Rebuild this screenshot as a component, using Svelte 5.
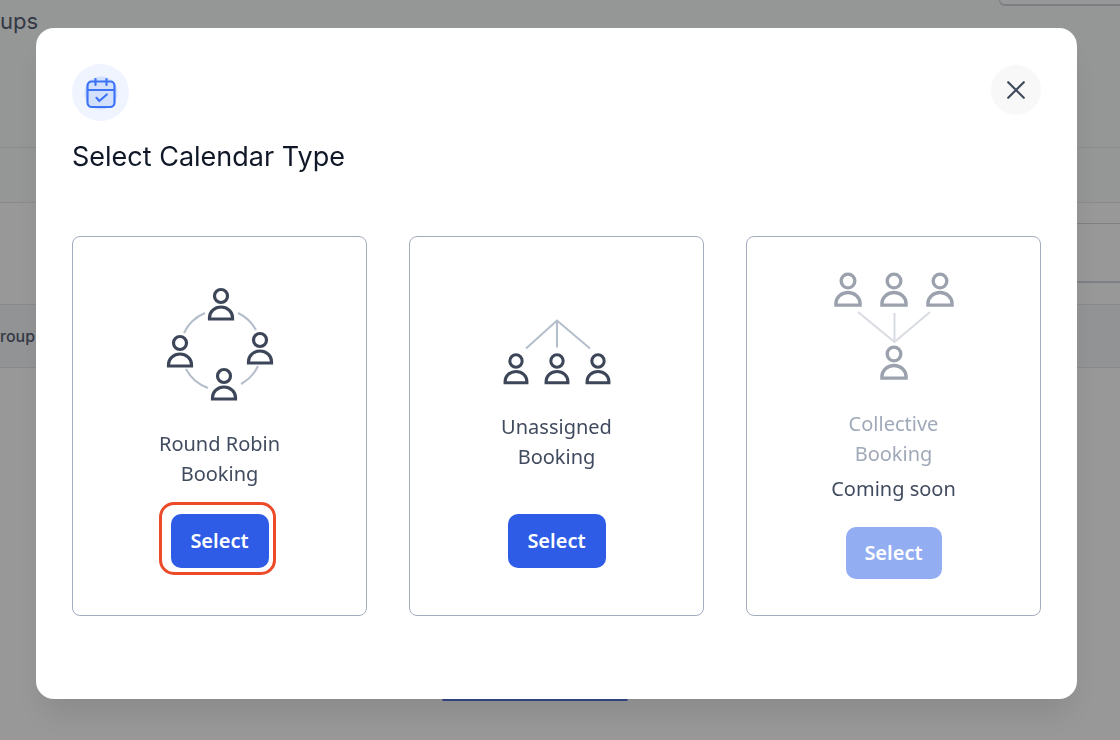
<script>
    const types = [
        {
            id: "round-robin",
            label: "Round Robin Booking",
            width: 116, height: 120, scale: 1,
            people: [[59, 11], [18, 58], [98, 55], [62, 91]],
            lines: "M22 48A40 40 0 0 1 43 28M76 28A40 40 0 0 1 94 45M24 84A40 40 0 0 0 46 103M96 81A40 40 0 0 1 79 99"
        },
        {
            id: "unassigned",
            label: "Unassigned Booking",
            width: 116, height: 72, scale: 0.95,
            people: [[17, 45], [58, 45], [99, 45]],
            lines: "M27 32.500L58 4.500L91 32.500M58 4.500V31.500"
        },
        {
            id: "collective",
            label: "Collective Booking",
            width: 128, height: 114, scale: 1.05,
            people: [[18, 12], [64, 12], [110, 12], [64, 85]],
            lines: "M28 43L64.500 73L100 43M64.500 44V73",
            soon: true
        }
    ];
    let selected = "round-robin";
    let open = true;
</script>

<main class="page">
    <header class="topbar">
        <h2>ups</h2>
        <button class="new" aria-label="New group"></button>
    </header>
    <div class="tabs"></div>
    <div class="filters"><input aria-label="Search" /></div>
    <div class="thead">roup</div>
    <div class="body"><button aria-label="Create"></button></div>
</main>

{#if open}
<div class="overlay">
    <div class="modal" role="dialog" aria-modal="true" aria-labelledby="title">
        <div class="head">
            <div class="badge">
                <svg width="34" height="34" viewBox="0 0 34 34" fill="none" stroke="#3d74f7" stroke-width="2.2" stroke-linecap="round" stroke-linejoin="round">
                    <circle cx="17" cy="17" r="16.500" fill="#d3e0fc" stroke="none" />
                    <path d="M7.500 5.500h19a4 4 0 0 1 4 4v17a4.500 4.500 0 0 1-4.500 4.500h-18a4.500 4.500 0 0 1-4.500-4.500v-17a4 4 0 0 1 4-4zM3.500 14h27M11.500 3v6M22.500 3v6" />
                    <path d="M12.500 21.800l2.800 3.200 7.500-6.500" />
                </svg>
            </div>
            <button class="close" aria-label="Close" on:click={() => (open = false)}>
                <svg width="20" height="20" viewBox="0 0 20 20" fill="none" stroke="#414b5d" stroke-width="2.200" stroke-linecap="round">
                    <path d="M2.200 2.200L17.800 17.800M17.800 2.200L2.200 17.800" />
                </svg>
            </button>
        </div>
        <h1 id="title">Select Calendar Type</h1>
        <div class="cards">
            {#each types as type}
                <section class="card {type.id}">
                    <svg width={type.width} height={type.height} viewBox="0 0 {type.width} {type.height}" fill="none">
                        <path class="lines" d={type.lines} />
                        {#each type.people as [x, y]}
                            <g class="person" transform="translate({x} {y}) scale({type.scale})">
                                <circle r="6.500" />
                                <path d="M-11.500 23v-1.500a11.500 10.500 0 0 1 23 0v1.500z" />
                            </g>
                        {/each}
                    </svg>
                    <p class="label">{type.label}</p>
                    {#if type.soon}<p class="soon">Coming soon</p>{/if}
                    <button class="select" class:active={selected === type.id} disabled={type.soon} on:click={() => (selected = type.id)}>Select</button>
                </section>
            {/each}
        </div>
    </div>
</div>
{/if}

<style>
    :global(body) {
        margin: 0;
    }
    h1, h2, p {
        margin: 0;
        font-weight: 400;
    }
    button {
        border: none;
        padding: 0;
        cursor: pointer;
    }
    .page {
        height: 100vh;
        overflow: hidden;
        display: flex;
        flex-direction: column;
        background: #fefefe;
        color: #566073;
        font-family: Inter, sans-serif;
    }
    .topbar {
        height: 147px;
        display: flex;
        justify-content: space-between;
        align-items: flex-start;
        background: #f9fbfa;
        border-bottom: 1px solid #e4e7ec;
    }
    h2 {
        padding-top: 6px;
        font-size: 22px;
        line-height: 30px;
    }
    .new {
        width: 121px;
        height: 6px;
        box-sizing: border-box;
        border: 1px solid #cfd3dc;
        border-width: 0 0 2px 1px;
        border-radius: 0 0 0 10px;
        background: #fefefe;
    }
    .tabs {
        height: 54px;
        background: #f9fbfa;
        border-bottom: 1px solid #e4e7ec;
    }
    .filters {
        padding: 20px 0 21px;
        display: flex;
        justify-content: flex-end;
        border-bottom: 1px solid #e4e7ec;
    }
    .filters input {
        width: 30%;
        height: 60px;
        box-sizing: border-box;
        border: 1px solid #d0d5dd;
        border-bottom-width: 2px;
        border-right: none;
        background: none;
    }
    .thead {
        height: 62px;
        background: #f4f6f8;
        border-bottom: 1px solid #e4e7ec;
        font-size: 16px;
        font-weight: 500;
        line-height: 62px;
    }
    .body {
        flex: 1;
        display: flex;
        justify-content: center;
        align-items: flex-end;
        padding: 0 50px 39px 0;
    }
    .body button {
        width: 186px;
        height: 54px;
        border-radius: 2px;
        background: #5878e0;
    }
    .overlay {
        position: fixed;
        inset: 0;
        overflow: auto;
        padding: 28px 43px 40px 36px;
        background: rgba(0, 0, 0, 0.4);
    }
    .modal {
        padding: 36px 36px 83px;
        border-radius: 18px;
        background: #fff;
        box-shadow: 0 20px 32px -6px rgba(0, 0, 0, 0.1);
    }
    .head {
        display: flex;
        justify-content: space-between;
        align-items: flex-start;
    }
    .badge {
        width: 57px;
        height: 57px;
        border-radius: 50%;
        display: grid;
        place-items: center;
        background: #eff4ff;
    }
    .close {
        width: 50px;
        height: 50px;
        margin-top: 1px;
        border-radius: 50%;
        display: grid;
        place-items: center;
        background: #f8f8f8;
    }
    h1 {
        margin: 18px 0 62px;
        color: #101828;
        font-family: Inter, sans-serif;
        font-size: 27px;
        line-height: 35px;
    }
    .cards {
        display: grid;
        grid-template-columns: repeat(3, 1fr);
        gap: 42px;
    }
    .card {
        min-height: 380px;
        box-sizing: border-box;
        padding: 48px 16px 36px;
        display: flex;
        flex-direction: column;
        align-items: center;
        border: 1px solid #a4abbd;
        border-radius: 8px;
        color: #414b5f;
        font-family: "Noto Sans", sans-serif;
        font-size: 20px;
        font-weight: 500;
        line-height: 30px;
        text-align: center;
    }
    .lines {
        stroke: #b4bdca;
        stroke-width: 2;
    }
    .person {
        stroke: #3d4659;
        stroke-width: 3.2;
    }
    .label {
        width: 130px;
        margin-top: 24px;
    }
    .select {
        position: relative;
        width: 98px;
        height: 54px;
        margin-top: 25px;
        border-radius: 10px;
        background: #2e5ce6;
        color: #fff;
        font: inherit;
        font-weight: 600;
    }
    /* highlight round the chosen type */
    .select.active::after {
        content: "";
        position: absolute;
        inset: -12px -7px -7px -12px;
        border: 3px solid #ec4a29;
        border-radius: 15px;
    }
    .unassigned {
        padding-top: 79px;
    }
    .unassigned .select {
        margin-top: 42px;
    }
    .collective {
        padding-top: 32px;
    }
    .collective .lines {
        stroke: #d9dbe2;
    }
    .collective .person {
        stroke: #9ba2ad;
    }
    .collective .label {
        margin-top: 26px;
        color: #a0a9b9;
    }
    .soon {
        margin-top: 5px;
    }
    .select:disabled {
        width: 96px;
        height: 52px;
        margin-top: 23px;
        background: #93adf2;
        cursor: default;
    }
</style>
